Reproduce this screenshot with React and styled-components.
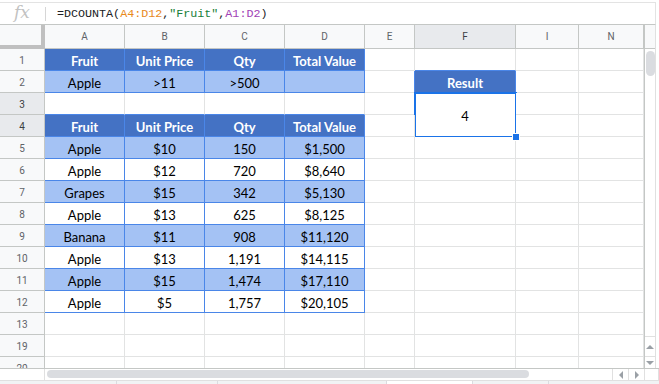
import React from "react";
import styled, { createGlobalStyle } from "styled-components";

const headBlue = "#4472c4";
const bandBlue = "#a4c2f4";
const lineBlue = "#4a86e8";
const gridLine = "#e2e3e3";
const chromeLine = "#c4c7c5";

const GlobalStyle = createGlobalStyle`
  html, body {
    margin: 0;
    padding: 0;
    background: #fff;
  }
  body {
    width: 659px;
    height: 384px;
    overflow: hidden;
    font-family: "Liberation Sans", Arial, sans-serif;
  }
`;

const Page = styled.div`
  width: 659px;
  height: 384px;
  display: flex;
  flex-direction: column;
  overflow: hidden;
`;

const FormulaBar = styled.div`
  margin-top: 2px;
  height: 24px;
  box-sizing: border-box;
  border-top: 1px solid #e3e3e3;
  border-bottom: 1px solid ${chromeLine};
  border-right: 1px solid #e3e3e3;
  width: 656px;
  display: flex;
  align-items: center;
`;

const Fx = styled.div`
  width: 45px;
  box-sizing: border-box;
  padding-left: 14px;
  font-family: "DejaVu Serif", serif;
  font-style: italic;
  font-size: 17px;
  color: #c2c2c2;
  line-height: 1;
  margin-top: -2px;
`;

const Divider = styled.div`
  width: 1px;
  height: 14px;
  background: #d6d6d6;
`;

const Formula = styled.div`
  margin-left: 11px;
  padding-top: 1px;
  font-family: "Liberation Mono", monospace;
  font-size: 11.7px;
  color: #202124;
  white-space: pre;
`;

const Ref = styled.span`
  color: ${({ tone }) => tone};
`;

const Body = styled.div`
  display: flex;
  height: 343px;
`;

const Grid = styled.div`
  width: 644px;
  height: 343px;
  overflow: hidden;
  display: grid;
  grid-template-columns: 45px 80px 80px 80px 80px 50px 101px 63px 65px;
  grid-auto-rows: 22px;
  grid-template-rows: 24px;
`;

const Corner = styled.div`
  background: #f8f9fa;
  border-right: 4px solid #c0c0c0;
  border-bottom: 4px solid #c0c0c0;
  box-sizing: border-box;
`;

const ColHead = styled.div`
  box-sizing: border-box;
  background: ${({ selected }) => (selected ? "#e8eaed" : "#f8f9fa")};
  border-right: 1px solid ${chromeLine};
  border-bottom: 1px solid ${chromeLine};
  display: flex;
  align-items: center;
  justify-content: center;
  font-family: "Roboto", "Liberation Sans", sans-serif;
  font-size: 10px;
  color: ${({ selected }) => (selected ? "#3c4043" : "#5f6368")};
`;

const RowHead = styled(ColHead)`
  padding-top: 2px;
`;

const Cell = styled.div`
  box-sizing: border-box;
  position: relative;
  grid-row: ${({ span }) => (span ? `span ${span}` : "auto")};
  border-right: 1px solid ${({ right }) => right};
  border-bottom: 1px solid ${({ bottom }) => bottom};
  background: ${({ kind }) =>
    kind === "head" ? headBlue : kind === "band" ? bandBlue : "#fff"};
  color: ${({ kind }) => (kind === "head" ? "#fff" : "#000")};
  font-weight: ${({ kind }) => (kind === "head" ? 700 : 400)};
  font-family: "Lato", "Liberation Sans", sans-serif;
  font-size: 13px;
  display: flex;
  align-items: center;
  justify-content: center;
  padding-top: 3px;
  white-space: nowrap;
`;

const Selected = styled(Cell)`
  &::after {
    content: "";
    position: absolute;
    left: -1px;
    top: -1px;
    right: -2px;
    bottom: -2px;
    border: 2px solid #1a73e8;
  }
  &::before {
    content: "";
    position: absolute;
    right: -5px;
    bottom: -5px;
    width: 6px;
    height: 6px;
    background: #1a73e8;
    border: 1px solid #fff;
    z-index: 2;
  }
`;

const VScroll = styled.div`
  width: 12px;
  box-sizing: border-box;
  border-left: 1px solid ${chromeLine};
  border-right: 1px solid #e0e0e0;
  display: flex;
  flex-direction: column;
`;

const VScrollHead = styled.div`
  height: 24px;
  flex-shrink: 0;
  box-sizing: border-box;
  background: #f8f9fa;
  border-bottom: 1px solid ${chromeLine};
`;

const VTrack = styled.div`
  flex: 1;
  padding: 2px 1px 0 1px;
`;

const Thumb = styled.div`
  background: #dadce0;
  border-radius: 5px;
  width: ${({ w }) => w};
  height: ${({ h }) => h};
`;

const ArrowBox = styled.div`
  height: ${({ h }) => h}px;
  flex-shrink: 0;
  box-sizing: border-box;
  border-top: 1px solid #e0e0e0;
  display: flex;
  align-items: center;
  justify-content: center;
`;

const HScroll = styled.div`
  height: 12px;
  display: flex;
  box-sizing: border-box;
  border-top: 1px solid ${chromeLine};
`;

const HLeft = styled.div`
  width: 45px;
  box-sizing: border-box;
  border-right: 1px solid #e0e0e0;
`;

const HTrack = styled.div`
  width: 567px;
  padding: 1px 0 0 2px;
`;

const HArrow = styled.div`
  width: 16px;
  box-sizing: border-box;
  border-left: 1px solid #e0e0e0;
  display: flex;
  align-items: center;
  justify-content: center;
`;

const HCorner = styled.div`
  width: 15px;
  box-sizing: border-box;
  border-left: 1px solid #e0e0e0;
  border-right: 1px solid #e0e0e0;
`;

const Tabs = styled.div`
  height: 3px;
  display: flex;
  background: #f1f3f4;
  border-top: 1px solid #e0e0e0;
`;

const Tab = styled.div`
  width: ${({ w }) => w}px;
  border-right: 1px solid #dadce0;
  background: ${({ active }) => (active ? "#fff" : "transparent")};
`;

const Tri = ({ dir }) => {
  const pts = {
    up: "0,5 4,1 8,5",
    down: "0,1 4,5 8,1",
    left: "5,0 1,4 5,8",
    right: "1,0 5,4 1,8",
  }[dir];
  const vert = dir === "up" || dir === "down";
  return (
    <svg width={vert ? 8 : 6} height={vert ? 6 : 8} viewBox={vert ? "0 0 8 6" : "0 0 6 8"}>
      <polygon points={pts} fill="#9aa0a6" />
    </svg>
  );
};

const columns = ["A", "B", "C", "D", "E", "F", "I", "N"];

const rows = [
  { n: 1, kind: "head", vals: ["Fruit", "Unit Price", "Qty", "Total Value"] },
  { n: 2, kind: "band", vals: ["Apple", ">11", ">500", ""] },
  { n: 3 },
  { n: 4, kind: "head", vals: ["Fruit", "Unit Price", "Qty", "Total Value"] },
  { n: 5, kind: "band", vals: ["Apple", "$10", "150", "$1,500"] },
  { n: 6, kind: "plain", vals: ["Apple", "$12", "720", "$8,640"] },
  { n: 7, kind: "band", vals: ["Grapes", "$15", "342", "$5,130"] },
  { n: 8, kind: "plain", vals: ["Apple", "$13", "625", "$8,125"] },
  { n: 9, kind: "band", vals: ["Banana", "$11", "908", "$11,120"] },
  { n: 10, kind: "plain", vals: ["Apple", "$13", "1,191", "$14,115"] },
  { n: 11, kind: "band", vals: ["Apple", "$15", "1,474", "$17,110"] },
  { n: 12, kind: "plain", vals: ["Apple", "$5", "1,757", "$20,105"] },
  { n: 13 },
  { n: 19 },
  { n: 20 },
];

// is the cell at (row index, column index) part of a blue table
const inTable = (ri, ci) => {
  const r = rows[ri];
  if (!r) return false;
  if (ci <= 3) return !!r.kind;
  return ci === 5 && r.n === 2;
};

const Sheet = () => {
  const cells = [];
  columns.forEach((c) =>
    cells.push(
      <ColHead key={`h${c}`} selected={c === "F"}>
        {c}
      </ColHead>
    )
  );

  rows.forEach((r, ri) => {
    cells.push(
      <RowHead key={`r${r.n}`} selected={r.n === 3 || r.n === 4}>
        {r.n}
      </RowHead>
    );
    columns.forEach((c, ci) => {
      if (c === "F" && r.n === 4) return;
      const here = inTable(ri, ci);
      const right = here || inTable(ri, ci + 1) ? lineBlue : gridLine;
      const bottom = here || inTable(ri + 1, ci) ? lineBlue : gridLine;
      const key = `${c}${r.n}`;

      if (c === "F" && r.n === 2) {
        cells.push(
          <Cell key={key} kind="head" right={lineBlue} bottom={lineBlue}>
            Result
          </Cell>
        );
        return;
      }
      if (c === "F" && r.n === 3) {
        cells.push(
          <Selected key={key} span={2} right={gridLine} bottom={gridLine}>
            4
          </Selected>
        );
        return;
      }
      const kind = ci <= 3 && r.kind ? r.kind : "empty";
      cells.push(
        <Cell key={key} kind={kind} right={right} bottom={bottom}>
          {ci <= 3 && r.vals ? r.vals[ci] : ""}
        </Cell>
      );
    });
  });

  return (
    <Grid>
      <Corner />
      {cells}
    </Grid>
  );
};

const App = () => {
  return (
    <Page>
      <GlobalStyle />
      <FormulaBar>
        <Fx>fx</Fx>
        <Divider />
        <Formula>
          =DCOUNTA(<Ref tone="#e8891c">A4:D12</Ref>,<Ref tone="#188038">"Fruit"</Ref>,
          <Ref tone="#a142b6">A1:D2</Ref>)
        </Formula>
      </FormulaBar>
      <Body>
        <Sheet />
        <VScroll>
          <VScrollHead />
          <VTrack>
            <Thumb w="9px" h="25px" />
          </VTrack>
          <ArrowBox h={20}>
            <Tri dir="up" />
          </ArrowBox>
          <ArrowBox h={12}>
            <Tri dir="down" />
          </ArrowBox>
        </VScroll>
      </Body>
      <HScroll>
        <HLeft />
        <HTrack>
          <Thumb w="482px" h="8px" />
        </HTrack>
        <HArrow>
          <Tri dir="left" />
        </HArrow>
        <HArrow>
          <Tri dir="right" />
        </HArrow>
        <HCorner />
      </HScroll>
      <Tabs>
        <Tab w={116} />
        <Tab w={100} />
        <Tab w={168} />
        <Tab w={85} active />
        <Tab w={75} />
      </Tabs>
    </Page>
  );
};

export default App;
